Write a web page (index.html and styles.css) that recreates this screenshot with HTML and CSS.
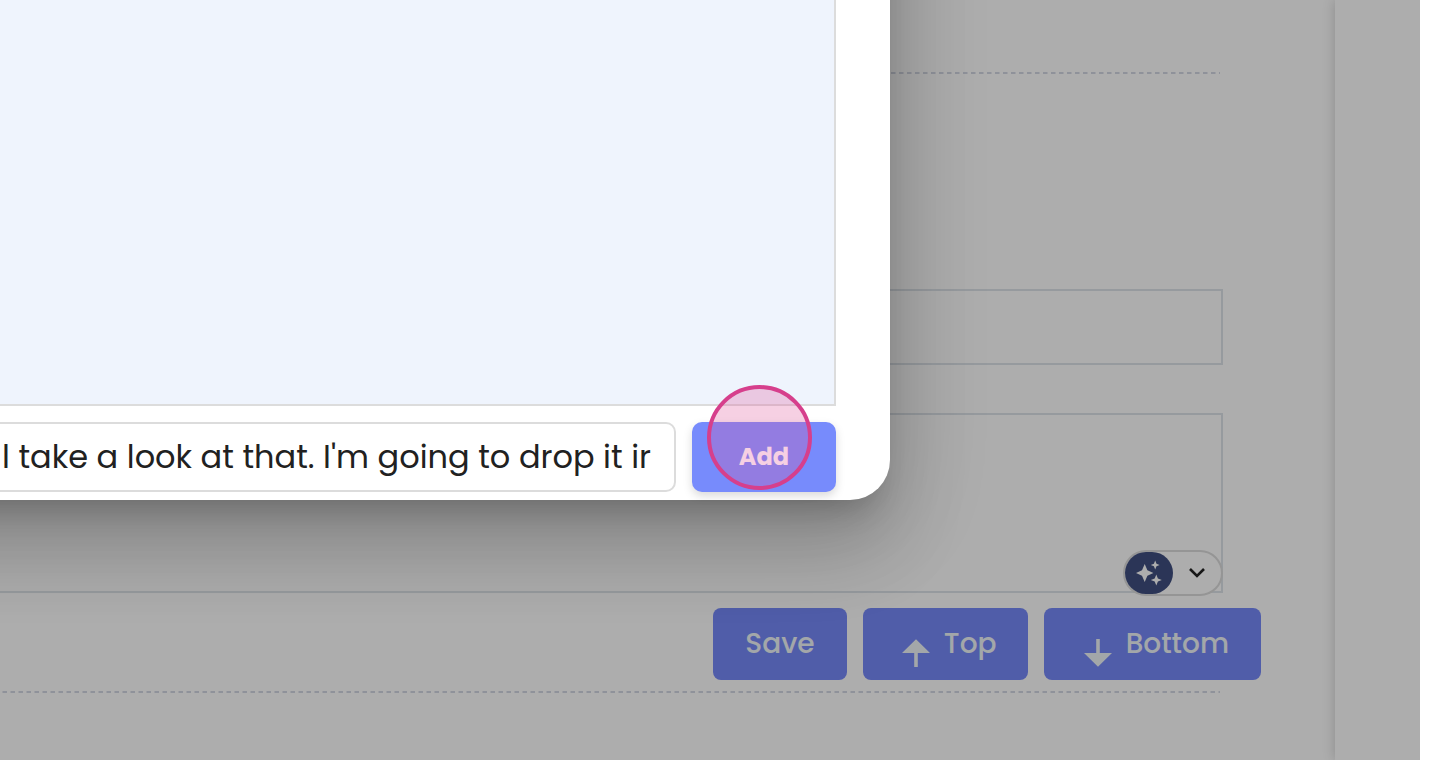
FILE: index.html
```
<!DOCTYPE html>
<html lang="en">
<head>
  <meta charset="UTF-8">
  <meta name="viewport" content="width=device-width, initial-scale=1.0">
  <title>Add Content</title>
  <link rel="stylesheet" href="styles.css">
</head>
<body>
  <div class="page">
    <div class="main">
      <div class="section">
        <div class="field"></div>
        <div class="field field-large">
          <div class="ai-pill">
            <button class="ai-btn" aria-label="Assistant">
              <svg width="28" height="28" viewBox="0 0 28 28">
                <path d="M9.7 5L12.4 11.3L18.4 14L12.4 16.7L9.7 23L7 16.7L1 14L7 11.3Z"/>
                <path d="M20.2 1.5L21.5 4.7L24.6 6L21.5 7.3L20.2 10.5L18.9 7.3L15.8 6L18.9 4.7Z"/>
                <path d="M21.3 15.5L22.9 19.4L26.8 21L22.9 22.6L21.3 26.5L19.7 22.6L15.8 21L19.7 19.4Z"/>
              </svg>
            </button>
            <svg class="chevron" width="18" height="12" viewBox="0 0 18 12">
              <path d="M2 2L9 9L16 2"/>
            </svg>
          </div>
        </div>
        <div class="actions">
          <button class="btn">Save</button>
          <button class="btn btn-icon">
            <svg width="28" height="28" viewBox="0 0 28 28"><path d="M14 .3L28 14H15.8V28H12.2V14H0Z"/></svg>
            <span>Top</span>
          </button>
          <button class="btn btn-icon">
            <svg width="28" height="28" viewBox="0 0 28 28"><path d="M14 27.7L28 14H15.8V0H12.2V14H0Z"/></svg>
            <span>Bottom</span>
          </button>
        </div>
      </div>
    </div>
    <div class="side"></div>
  </div>

  <div class="overlay">
    <div class="dialog">
      <div class="preview"></div>
      <div class="add-row">
        <div class="add-input"><span>l take a look at that. I'm going to drop it ir</span></div>
        <button class="add-btn">Add<i class="click-ring"></i></button>
      </div>
    </div>
  </div>
</body>
</html>
```
FILE: styles.css
```
* {
  box-sizing: border-box;
}

body {
  margin: 0;
  height: 760px;
  overflow: hidden;
  background-color: #fff;
  font-family: Poppins, Inter, sans-serif;
  font-feature-settings: "cv11";
}

button {
  font: inherit;
  font-feature-settings: inherit;
  border: none;
  padding: 0;
}

.page {
  display: flex;
  width: 1420px;
  height: 760px;
  overflow: hidden;
}

.main {
  width: 1335px;
  padding-top: 72px;
}

.side {
  flex: 1;
  background-color: #fff;
  box-shadow: 0 0 12px rgba(0, 0, 0, 0.2);
}

/* dashed rules above and below the section */
.section {
  display: flex;
  flex-direction: column;
  height: 621px;
  padding-top: 217px;
  background:
    repeating-linear-gradient(90deg, #d3d7e4 0 4px, transparent 5px 7.5px, #d3d7e4 8px) 3px 0 / 1217px 2px no-repeat,
    repeating-linear-gradient(90deg, transparent 0 2px, #d3d7e4 3px 6.5px, transparent 7.5px 8px) 0 100% / 1220px 2px no-repeat;
}

.field {
  width: 1223px;
  height: 76px;
  border: 2px solid #dde4e9;
  border-left: none;
}

.field-large {
  display: flex;
  justify-content: flex-end;
  align-items: flex-end;
  height: 180px;
  margin-top: 48px;
}

.ai-pill {
  display: flex;
  align-items: center;
  width: 100px;
  height: 46px;
  margin: 0 -2px -5px 0;
  border: 2px solid #dcdcdc;
  border-radius: 23px;
  background-color: #fff;
}

.ai-btn {
  display: flex;
  align-items: center;
  justify-content: center;
  width: 48px;
  height: 42px;
  border-radius: 21px;
  background-color: #404f80;
}

.ai-btn svg {
  fill: #fff;
}

.chevron {
  margin-left: 14.5px;
  fill: none;
  stroke: #222;
  stroke-width: 2.6;
}

.actions {
  display: flex;
  gap: 16px;
  margin: 15px 0 0 713px;
}

.btn {
  display: flex;
  align-items: center;
  justify-content: center;
  width: 134px;
  height: 72px;
  border-radius: 8px;
  background-color: #7689fa;
  color: #f0f6fa;
  font-size: 28px;
  font-weight: 500;
}

.btn-icon {
  justify-content: space-between;
  width: 165px;
  padding: 0 31.5px 0 38.5px;
}

.btn-icon:last-child {
  width: 217px;
  padding: 0 32px 0 39.5px;
}

.btn svg {
  margin-top: 18px;
  fill: currentColor;
}

.overlay {
  position: absolute;
  top: 0;
  left: 0;
  width: 1420px;
  height: 760px;
  overflow: hidden;
  background-color: rgba(0, 0, 0, 0.32);
}

.dialog {
  width: 1290px;
  height: 700px;
  margin: -200px 0 0 -400px;
  padding: 0 54px 8px;
  border-radius: 40px;
  background-color: #fff;
  box-shadow: 0 22px 30px -14px rgba(0, 0, 0, 0.2),
    0 48px 76px 6px rgba(0, 0, 0, 0.14),
    0 18px 92px 16px rgba(0, 0, 0, 0.12);
}

.preview {
  height: 606px;
  border: 2px solid #dcdcdc;
  background-color: #eff4fd;
}

.add-row {
  display: flex;
  gap: 16px;
  margin-top: 16px;
}

.add-input {
  display: flex;
  flex: 1;
  align-items: center;
  justify-content: flex-end;
  height: 70px;
  padding-right: 23px;
  border: 2px solid #dcdcdc;
  border-radius: 10px;
  color: #212121;
  font-size: 32px;
  white-space: nowrap;
}

.add-btn {
  position: relative;
  width: 144px;
  height: 70px;
  padding-bottom: 2px;
  border-radius: 10px;
  background-color: #778bfc;
  box-shadow: 0 4px 10px rgba(0, 0, 0, 0.15);
  color: #fff;
  font-size: 24px;
  font-weight: 700;
}

.click-ring {
  position: absolute;
  top: -37px;
  left: 15px;
  width: 105px;
  height: 105px;
  border: 4px solid #d63f8c;
  border-radius: 50%;
  background-color: rgba(222, 87, 155, 0.28);
}
```
